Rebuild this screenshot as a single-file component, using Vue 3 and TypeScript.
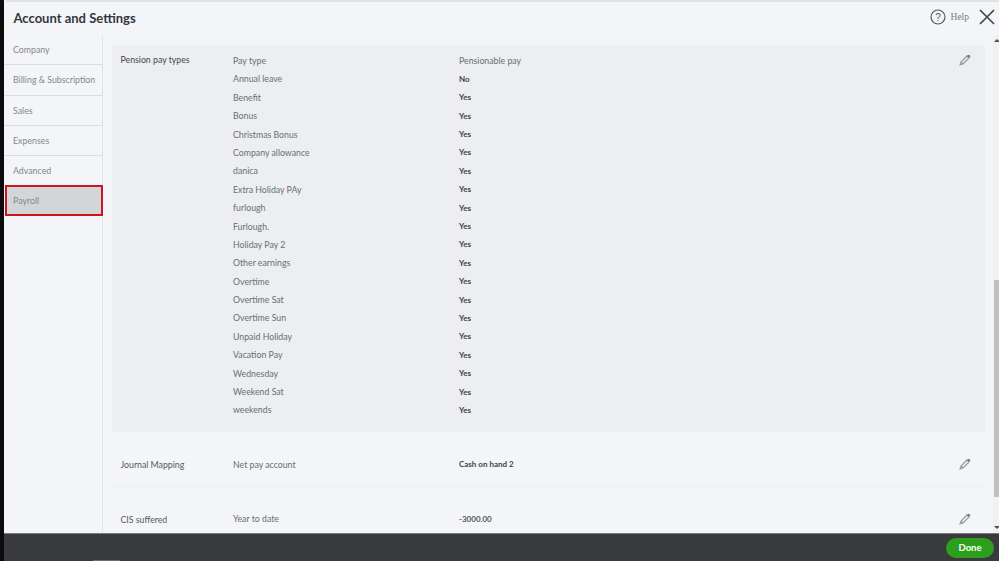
<template>
  <div class="screen">
    <div class="topline"></div>
    <header class="head">
      <h1>Account and Settings</h1>
      <div class="help">
        <svg width="16" height="16" viewBox="0 0 16 16" class="help-icon">
          <circle cx="8" cy="8" r="7" fill="none" stroke="#55585c" stroke-width="1.2" />
          <text x="8" y="11.6" text-anchor="middle" class="q">?</text>
        </svg>
        <span>Help</span>
      </div>
      <svg class="close" width="16" height="16" viewBox="0 0 16 16">
        <path d="M1 1 15 15M15 1 1 15" stroke="#44474b" stroke-width="1.7" fill="none" />
      </svg>
    </header>
    <div class="body">
      <nav class="side">
        <div v-for="item in nav" :key="item" class="nav-item" :class="{ active: item === 'Payroll' }">{{ item }}</div>
      </nav>
      <main class="content">
        <section class="block shaded">
          <div class="label">Pension pay types</div>
          <div class="table">
            <div class="line">
              <span class="type">Pay type</span><span class="head-val">Pensionable pay</span>
            </div>
            <div v-for="p in payTypes" :key="p.name" class="line">
              <span class="type">{{ p.name }}</span><b>{{ p.value }}</b>
            </div>
          </div>
          <svg class="pencil" width="12" height="12" viewBox="0 0 12 12">
            <path d="M1.2 10.8 2 8 8 2l2 2-6 6zM2 8l2 2" fill="none" stroke="#9a9da0" stroke-width="1.3" />
            <path d="M8 2l1-1a1 1 0 0 1 1.4 0l.6.6a1 1 0 0 1 0 1.4l-1 1z" fill="#7a7d80" />
          </svg>
        </section>
        <section class="block row journal">
          <div class="label">Journal Mapping</div>
          <div class="line">
            <span class="type">Net pay account</span><b>Cash on hand 2</b>
          </div>
          <svg class="pencil" width="12" height="12" viewBox="0 0 12 12">
            <path d="M1.2 10.8 2 8 8 2l2 2-6 6zM2 8l2 2" fill="none" stroke="#9a9da0" stroke-width="1.3" />
            <path d="M8 2l1-1a1 1 0 0 1 1.4 0l.6.6a1 1 0 0 1 0 1.4l-1 1z" fill="#7a7d80" />
          </svg>
        </section>
        <section class="block row cis">
          <div class="label">CIS suffered</div>
          <div class="line">
            <span class="type">Year to date</span><b class="amount">-3000.00</b>
          </div>
          <svg class="pencil" width="12" height="12" viewBox="0 0 12 12">
            <path d="M1.2 10.8 2 8 8 2l2 2-6 6zM2 8l2 2" fill="none" stroke="#9a9da0" stroke-width="1.3" />
            <path d="M8 2l1-1a1 1 0 0 1 1.4 0l.6.6a1 1 0 0 1 0 1.4l-1 1z" fill="#7a7d80" />
          </svg>
        </section>
      </main>
      <div class="scrollbar">
        <i class="arrow up"></i>
        <div class="thumb"></div>
        <i class="arrow down"></i>
      </div>
    </div>
    <footer class="foot">
      <span class="sliver"></span>
      <button class="done">Done</button>
    </footer>
  </div>
</template>

<script setup lang="ts">
  const nav = ["Company", "Billing & Subscription", "Sales", "Expenses", "Advanced", "Payroll"];

  const names = [
    "Benefit", "Bonus", "Christmas Bonus", "Company allowance", "danica", "Extra Holiday PAy",
    "furlough", "Furlough.", "Holiday Pay 2", "Other earnings", "Overtime", "Overtime Sat",
    "Overtime Sun", "Unpaid Holiday", "Vacation Pay", "Wednesday", "Weekend Sat", "weekends",
  ];

  const payTypes = [
    { name: "Annual leave", value: "No" },
    ...names.map((name) => ({ name, value: "Yes" })),
  ];
</script>

<style>
  html, body {
    margin: 0;
    overflow: hidden;
  }
</style>

<style scoped>
  .screen {
    width: 999px;
    height: 561px;
    display: flex;
    flex-direction: column;
    overflow: hidden;
    box-sizing: border-box;
    border-left: 4px solid #0c0c0c;
    background: #f3f5f9;
    font-family: Lato, "Open Sans", sans-serif;
    color: #5f6367;
  }

  .topline {
    height: 2px;
    flex: none;
    margin-left: 2px;
    background: #e0e1e3;
  }

  .head {
    height: 33px;
    flex: none;
    display: flex;
    align-items: center;
    padding: 0 4px 4px 9.5px;
    box-sizing: border-box;
  }

  h1 {
    margin: 2px auto 0 0;
    font-size: 13px;
    font-weight: 700;
    color: #33373b;
  }

  .help {
    display: flex;
    align-items: center;
    gap: 5px;
    font-family: "Liberation Serif", serif;
    font-size: 9.5px;
    color: #77797c;
    margin-right: 10px;
  }

  .q {
    font-family: "Liberation Sans", sans-serif;
    font-size: 10px;
    fill: #55585c;
  }

  .body {
    flex: 1;
    min-height: 0;
    display: flex;
    overflow: hidden;
  }

  .side {
    width: 98px;
    flex: none;
    border-right: 1px solid #e2e3e5;
  }

  .nav-item {
    height: 30.3px;
    box-sizing: border-box;
    padding: 0 9px;
    display: flex;
    align-items: center;
    white-space: nowrap;
    font-size: 8.8px;
    color: #85888b;
    border-bottom: 1px solid #dcdddf;
  }

  .nav-item.active {
    background: #d3d6d9;
    border: 2px solid #c8161c;
    padding-left: 6px;
    margin: -1px 0 0 1px;
    height: 31px;
    width: 98px;
  }

  .content {
    width: 873px;
    flex: none;
    margin-left: 9px;
    padding-top: 10px;
  }

  .block {
    position: relative;
    display: flex;
    font-size: 8.75px;
  }

  .shaded {
    background: #eceef1;
    height: 387px;
    box-sizing: border-box;
    padding-top: 6.3px;
  }

  .row {
    align-items: center;
    box-sizing: border-box;
  }

  .journal {
    height: 55px;
    padding-top: 11px;
    border-bottom: 1px solid #eceef1;
  }

  .cis {
    height: 54px;
    padding-top: 10px;
  }

  .label {
    width: 121px;
    padding-left: 8.5px;
    box-sizing: border-box;
    flex: none;
    color: #55595d;
  }

  .shaded .label {
    color: #44484c;
    line-height: 18.4px;
  }

  .line {
    display: flex;
    height: 18.4px;
    align-items: center;
  }

  .type {
    width: 226px;
    flex: none;
    color: #6a6e72;
  }

  .head-val {
    color: #6a6e72;
  }

  b {
    font-size: 8px;
    font-weight: 700;
    color: #3f4347;
  }

  b.amount {
    color: #55595d;
  }

  .pencil {
    position: absolute;
    right: 14px;
    top: 9px;
  }

  .row .pencil {
    top: 26px;
  }

  .scrollbar {
    width: 6px;
    margin-left: auto;
    position: relative;
    background: #f1f1f1;
  }

  .thumb {
    position: absolute;
    left: 1px;
    right: 0;
    top: 245px;
    height: 217px;
    background: #c1c1c1;
  }

  .arrow {
    position: absolute;
    left: 1px;
    border-left: 3px solid transparent;
    border-right: 3px solid transparent;
  }

  .up {
    top: 4px;
    border-bottom: 3px solid #505050;
  }

  .down {
    bottom: 4px;
    border-top: 3px solid #505050;
  }

  .foot {
    height: 27px;
    flex: none;
    position: relative;
    background: #393a3d;
    border-top: 1px solid #77787a;
    display: flex;
    align-items: center;
    justify-content: flex-end;
    padding-right: 5px;
  }

  .sliver {
    position: absolute;
    left: 89px;
    bottom: 0;
    width: 27px;
    height: 1px;
    background: #6c6d70;
  }

  .done {
    width: 48px;
    height: 20px;
    padding: 0;
    border: 0;
    border-radius: 10px;
    background: #2ca01c;
    color: #fff;
    font-family: Lato, sans-serif;
    font-size: 9.5px;
    font-weight: 700;
  }
</style>
